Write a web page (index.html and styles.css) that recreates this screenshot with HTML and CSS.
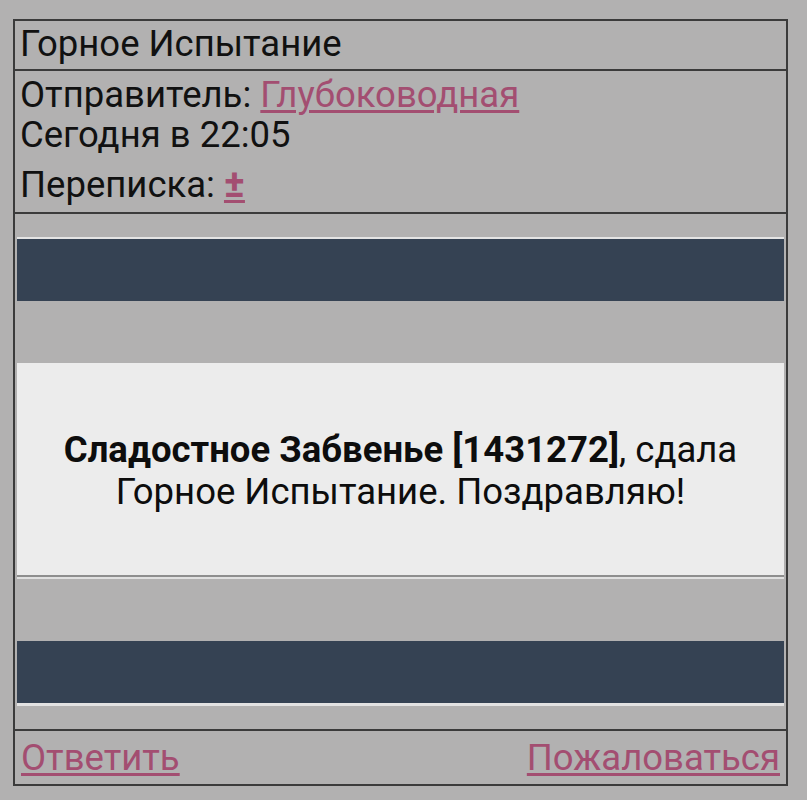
FILE: index.html
```html
<!DOCTYPE html>
<html lang="ru">
<head>
<meta charset="utf-8">
<link rel="stylesheet" href="styles.css">
</head>
<body>
<div class="mail">
  <div class="row title">Горное Испытание</div>
  <div class="row info">
    <div class="line">Отправитель: <a class="link" href="#">Глубоководная</a></div>
    <div class="line">Сегодня в 22:05</div>
    <div class="line corr">Переписка: <a class="link plus" href="#">±</a></div>
  </div>
  <div class="row content">
    <div class="bar bar-top"></div>
    <div class="gap"></div>
    <div class="message">
      <p class="msg-text"><b>Сладостное Забвенье [1431272]</b>, сдала Горное Испытание. Поздравляю!</p>
    </div>
    <div class="gap gap-low"></div>
    <div class="bar bar-bottom"></div>
  </div>
  <div class="row footer">
    <a class="link" href="#">Ответить</a>
    <a class="link" href="#">Пожаловаться</a>
  </div>
</div>
</body>
</html>
```

FILE: styles.css
```css
html, body {
  margin: 0;
  padding: 0;
}
body {
  background: #b2b1b1;
  font-family: Roboto, "Noto Sans", sans-serif;
  color: #111;
  font-size: 36.5px;
}
.mail {
  margin: 19px 0 0 13px;
  width: 771px;
  border: 2px solid #3b3b3b;
}
.row + .row {
  border-top: 2px solid #3b3b3b;
}
.title {
  height: 48px;
  line-height: 46px;
  padding-left: 5px;
}
.info {
  padding: 4px 0 7px 5px;
}
.line {
  line-height: 40px;
  height: 40px;
}
.corr {
  margin-top: 10px;
}
.link {
  color: #a34e71;
  text-decoration: underline;
  text-decoration-thickness: 3px;
  text-underline-offset: 3px;
}
.plus {
  font-weight: bold;
  font-size: 39px;
  line-height: 30px;
}
.content {
  padding: 23px 2px 23px 2px;
}
.bar {
  height: 62px;
  background: #354253;
}
.bar-top {
  border-top: 2px solid #e4e4e4;
}
.bar-bottom {
  border-bottom: 3px solid #e2e2e2;
}
.gap {
  height: 62px;
}
.gap-low {
  height: 64px;
}
.message {
  height: 208px;
  padding-top: 4px;
  background: #ececec;
  border-bottom: 2px solid #8e8e8e;
  box-shadow: 0 2px 0 #e0e0e0;
  display: flex;
  align-items: center;
  justify-content: center;
}
.msg-text {
  margin: 0;
  width: 720px;
  text-align: center;
  font-size: 36.5px;
  line-height: 42px;
  color: #0d0d0d;
}
.footer {
  display: flex;
  justify-content: space-between;
  line-height: 53px;
  padding: 0 6px 0 6px;
}
```
